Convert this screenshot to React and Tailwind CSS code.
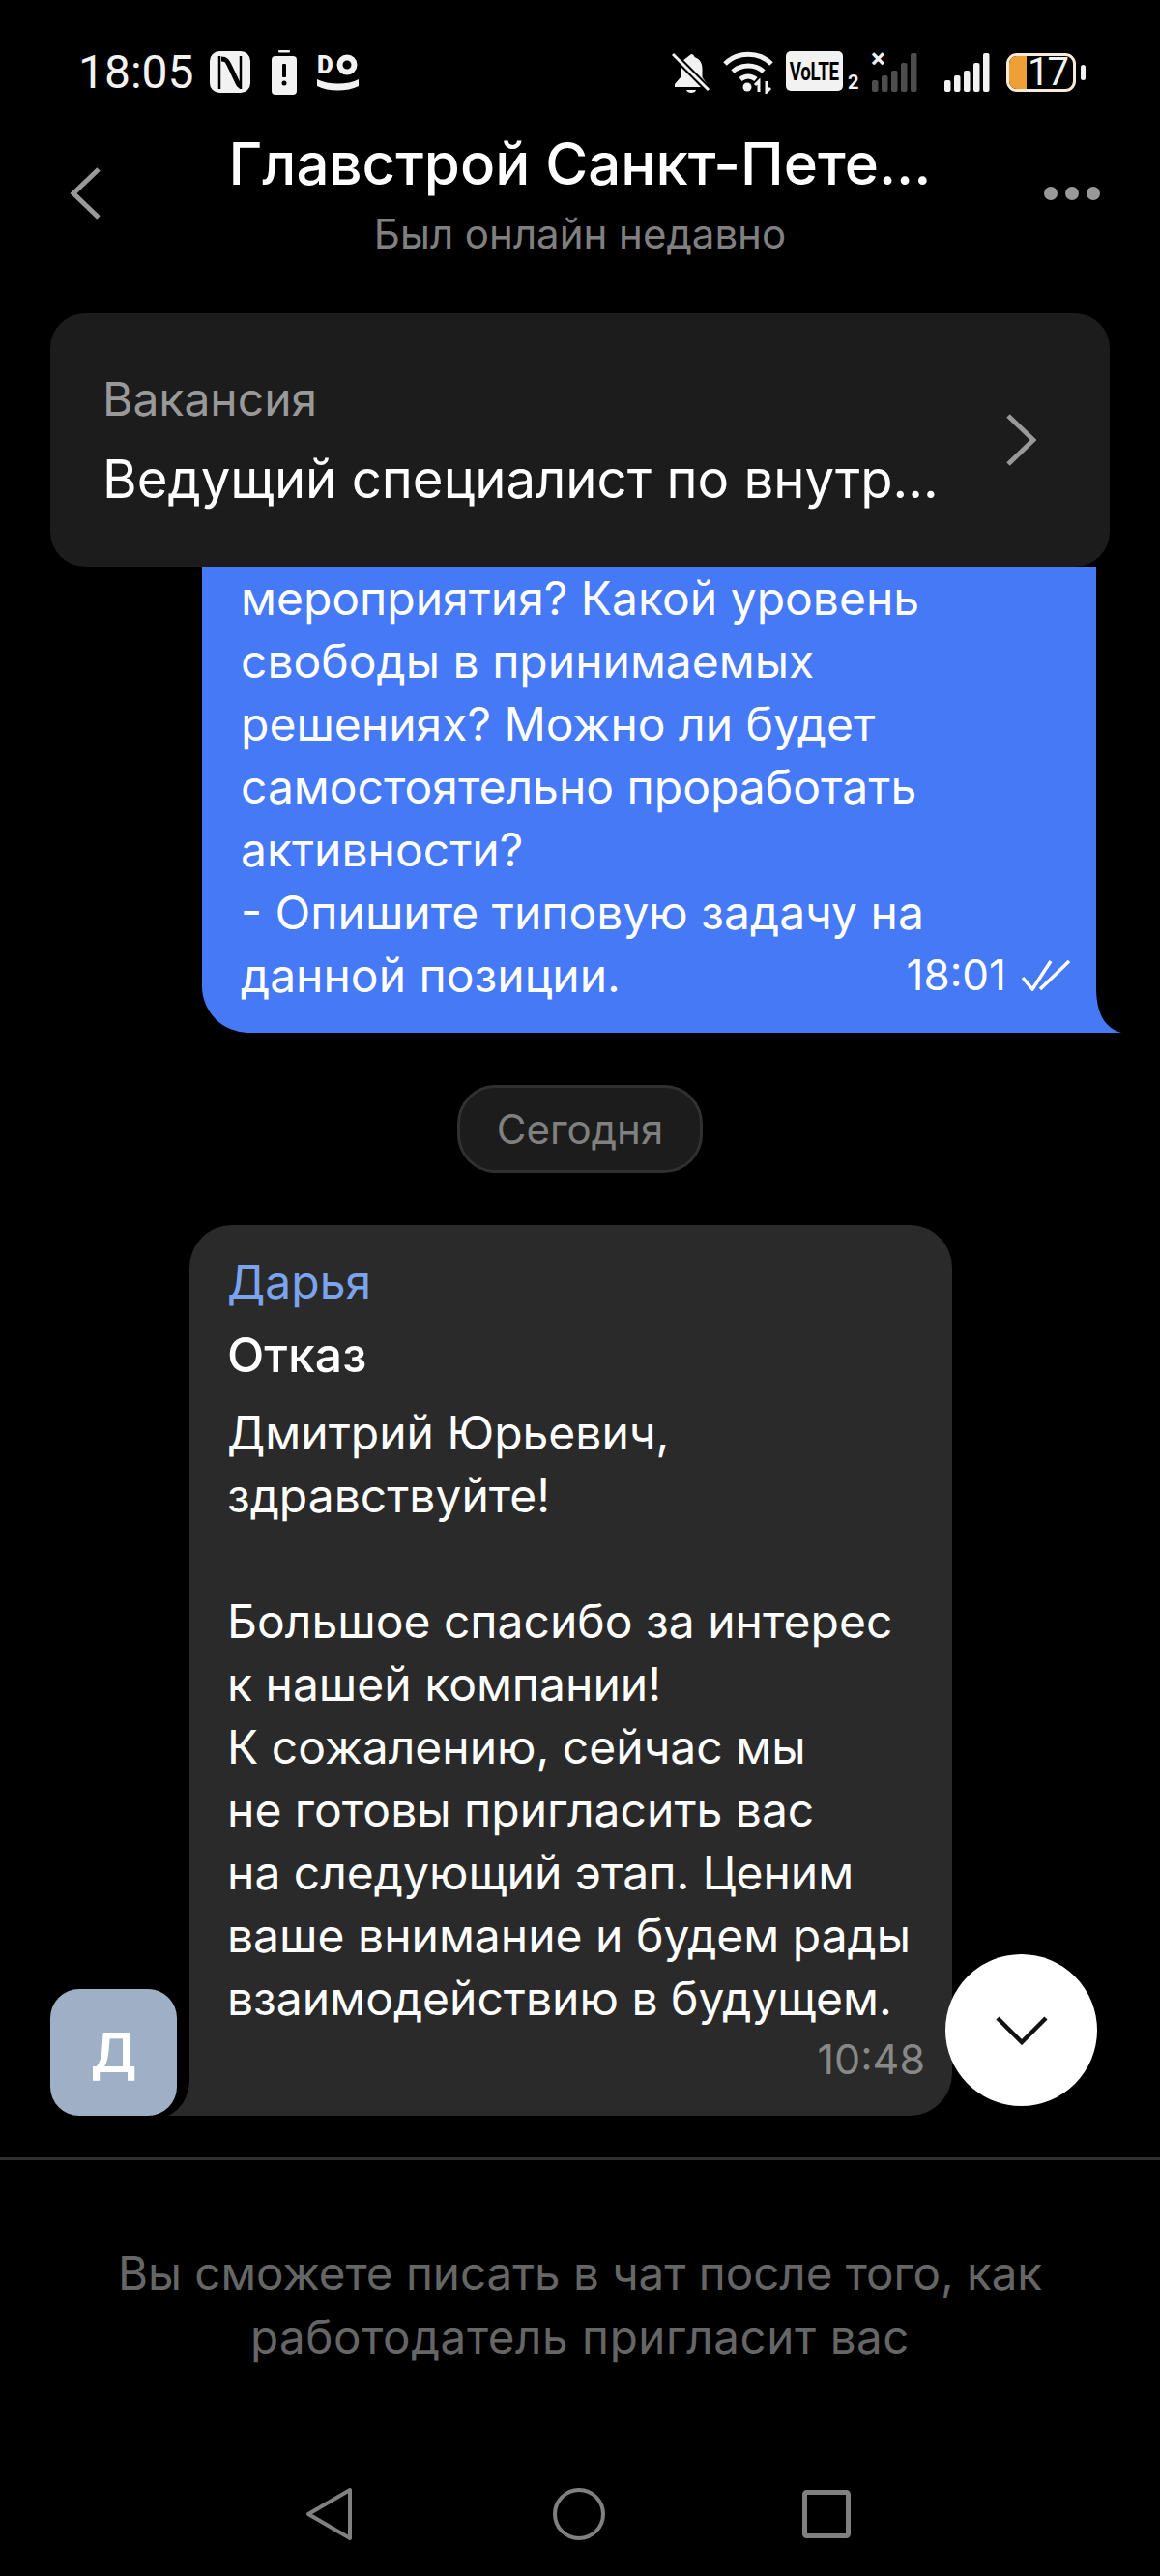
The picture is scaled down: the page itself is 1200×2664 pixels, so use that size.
import React from 'react';

const blueLines = [
  'мероприятия? Какой уровень',
  'свободы в принимаемых',
  'решениях? Можно ли будет',
  'самостоятельно проработать',
  'активности?',
  '- Опишите типовую задачу на',
];

const greyLines = [
  'Дмитрий Юрьевич,',
  'здравствуйте!',
  '\u00a0',
  'Большое спасибо за интерес',
  'к нашей компании!',
  'К сожалению, сейчас мы',
  'не готовы пригласить вас',
  'на следующий этап. Ценим',
  'ваше внимание и будем рады',
  'взаимодействию в будущем.',
];

function Bars({ color }) {
  const tops = [28, 23, 18, 10, 0];
  return (
    <svg width="48" height="40" viewBox="0 0 48 40" fill={color}>
      {tops.map((top, i) => (
        <rect key={i} x={i * 10} y={top} width="6.5" height={40 - top} rx="2" />
      ))}
    </svg>
  );
}

function StatusBar() {
  return (
    <div className="h-[130px] flex justify-between items-start pt-[52px] pl-[81px] pr-[77px] text-[#f2f2f2] font-['Roboto',sans-serif]">
      <div className="flex items-start">
        <span className="text-[48px] leading-[56px] mr-[16px] -mt-[5px] whitespace-nowrap">18:05</span>
        {/* NFC */}
        <svg width="42" height="44" viewBox="0 0 42 44" className="mt-[1px]">
          <rect width="42" height="43" rx="10" fill="#f2f2f2" />
          <path d="M10 5v34M32 5v34" fill="none" stroke="#000" strokeWidth="2.500" />
          <path d="M12 8c5 0 6 2 8 6l9 19c1 2 2 3 3 3" fill="none" stroke="#000" strokeWidth="5" />
          <path d="M10 36h1M32 7h-1" stroke="#000" strokeWidth="3" />
        </svg>
        {/* батарея с предупреждением */}
        <svg width="26" height="46" viewBox="0 0 26 46" className="ml-[22px]">
          <rect x="7" y="0" width="12" height="2.500" rx="1" fill="#f2f2f2" />
          <rect x="0" y="6" width="26" height="40" rx="4" fill="#f2f2f2" />
          <rect x="11" y="14" width="4" height="14" rx="1" fill="#000" />
          <circle cx="13" cy="34" r="2.500" fill="#000" />
        </svg>
        <svg width="48" height="48" viewBox="-2 -8 48 48" className="ml-[19px] -mt-[4px]">
          <text x="0" y="20" fontSize="26" fontWeight="900" fill="#f2f2f2" fontFamily="Roboto, sans-serif">D</text>
          <circle cx="31" cy="11" r="7.500" fill="none" stroke="#f2f2f2" strokeWidth="6" />
          <path d="M0 26c12 6 32 6 43 0v7c-12 6-31 6-43 0z" fill="#f2f2f2" />
        </svg>
      </div>
      <div className="flex items-start mt-[1px]">
        {/* колокольчик выключен */}
        <svg width="40" height="46" viewBox="0 0 40 46">
          <path d="M20 3c2 0 3 1 3.500 3 6 2 8 7 8 12v9l5 7v3H3v-3l6-7v-9c0-3 .5-6 2-8z" fill="#f2f2f2" />
          <path d="M15 40h10c-.5 4-9 4-10 0z" fill="#f2f2f2" />
          <path d="M2 4l36 36" stroke="#000" strokeWidth="7" />
          <path d="M1 3l37 37" stroke="#f2f2f2" strokeWidth="3" />
        </svg>
        {/* wifi */}
        <svg width="54" height="44" viewBox="0 0 54 44" fill="none" stroke="#f2f2f2" strokeWidth="5" className="ml-[13px]">
          <path d="M2 13C15 0 37 0 50 13" />
          <path d="M10 21c9-8 23-8 32 0" />
          <path d="M18 29c5-4 11-4 16 0" />
          <circle cx="25" cy="37" r="4.500" fill="#f2f2f2" stroke="none" />
          <path d="M37 42V31l-4 4M45 31v11l4-4" strokeWidth="3" />
        </svg>
        <div className="ml-[11px] w-[59px] h-[41px] rounded-[5px] bg-[#f2f2f2] flex items-center justify-center">
          <span className="text-black font-bold text-[26px] leading-none scale-x-[0.72] tracking-[-0.5px]">VoLTE</span>
        </div>
        <span className="ml-[5px] mt-[20px] w-[12px] text-[20px] leading-[24px] font-bold">2</span>
        <div className="relative ml-[13px] mt-[2px]">
          <Bars color="#4d4d4d" />
          <span className="absolute -left-[1px] -top-[8px] text-[28px] leading-[28px] font-bold">×</span>
        </div>
        <div className="ml-[27px] mt-[2px]">
          <Bars color="#f2f2f2" />
        </div>
        {/* батарея 17 */}
        <div className="ml-[16px] mt-[2px] w-[72px] h-[40px] rounded-[11px] border-[3px] border-[#f7ead9] flex items-center">
          <div className="w-[18px] h-full rounded-l-[8px] bg-[#ee9f35]"></div>
          <span className="ml-[1px] text-[40px] leading-[34px] tracking-[-2px]">17</span>
        </div>
        <div className="ml-[5px] mt-[14px] w-[5px] h-[16px] rounded-full bg-[#f2f2f2]"></div>
      </div>
    </div>
  );
}

function Header() {
  return (
    <div className="h-[194px] pt-[1px] relative flex flex-col items-center">
      <svg width="32" height="54" viewBox="0 0 32 54" fill="none" stroke="#999" strokeWidth="5" className="absolute left-[72px] top-[43px]">
        <path d="M30 2 4 27l26 25" />
      </svg>
      <div className="text-[60px] leading-[76px] font-medium text-white">Главстрой Санкт-Пете...</div>
      <div className="text-[42px] leading-[52px] mt-[9px] text-[#808080]">Был онлайн недавно</div>
      <div className="absolute right-[62px] top-[63px] flex gap-[8px]">
        <span className="w-[14px] h-[14px] rounded-full bg-[#999]"></span>
        <span className="w-[14px] h-[14px] rounded-full bg-[#999]"></span>
        <span className="w-[14px] h-[14px] rounded-full bg-[#999]"></span>
      </div>
    </div>
  );
}

export default function App() {
  return (
    <div className="w-[1200px] h-[2664px] bg-black overflow-hidden relative font-['Inter',sans-serif] flex flex-col">
      <StatusBar />
      <Header />

      {/* Вакансия */}
      <div className="mx-[52px] h-[262px] rounded-[36px] bg-[#1c1c1c] flex items-center justify-between pl-[54px] pr-[76px] shrink-0">
        <div className="pt-[6px]">
          <div className="text-[48px] leading-[56px] text-[#999]">Вакансия</div>
          <div className="text-[54.500px] leading-[72px] mt-[18px] text-white">Ведущий специалист по внутр...</div>
        </div>
        <svg width="32" height="54" viewBox="0 0 32 54" fill="none" stroke="#999" strokeWidth="5">
          <path d="M3 2l26 25L3 52" />
        </svg>
      </div>

      {/* Сообщение соискателя */}
      <div className="relative ml-[209px] w-[925px] h-[482px] bg-[#4579f5] rounded-bl-[48px] pl-[40px] text-white text-[48px] leading-[65px] shrink-0">
        {blueLines.map((line) => (
          <div key={line}>{line}</div>
        ))}
        <div className="flex items-end justify-between pr-[25px]">
          <span>данной позиции.</span>
          <span className="flex items-center text-[44px] gap-[16px]">
            18:01
            <svg width="52" height="32" viewBox="0 0 52 32" fill="none" stroke="#fff" strokeWidth="3.500">
              <path d="M1 18l10 12L30 1" />
              <path d="M19 30 49 1" />
            </svg>
          </span>
        </div>
        <svg width="28" height="48" viewBox="0 0 28 48" className="absolute left-full bottom-0">
          <path d="M0 0c0 24 6 42 26 48H0z" fill="#4579f5" />
        </svg>
      </div>

      {/* Дата */}
      <div className="flex justify-center mt-[54px] shrink-0">
        <div className="w-[254px] h-[91px] rounded-[40px] bg-[#1c1c1c] border-[3px] border-[#303030] flex items-center justify-center text-[42px] text-[#808080]">
          Сегодня
        </div>
      </div>

      {/* Сообщение работодателя */}
      <div className="flex items-end ml-[52px] mt-[54px] shrink-0">
        <div className="w-[131px] h-[131px] rounded-[30px] bg-[#9fb0c6] flex items-center justify-center text-white text-[56px] font-semibold z-10">
          Д
        </div>
        <div className="relative ml-[13px] w-[789px] h-[921px] rounded-[44px] rounded-bl-none bg-[#2a2a2a] pl-[39px] pt-[26px] text-[48px] leading-[65px] text-white">
          <div className="text-[#7ba4ef]">Дарья</div>
          <div className="font-medium mt-[11px] text-[50px]">Отказ</div>
          <div className="mt-[15px]">
            {greyLines.map((line, i) => (
              <div key={i}>{line}</div>
            ))}
          </div>
          <div className="text-right pr-[28px] text-[43px] leading-[60px] text-[#888]">10:48</div>
          <svg width="30" height="40" viewBox="0 0 30 40" className="absolute right-full bottom-0">
            <path d="M30 0c0 18-6 32-22 40h22z" fill="#2a2a2a" />
          </svg>
        </div>
      </div>

      <div className="h-[3px] mt-[43px] bg-[#303030] shrink-0"></div>

      <div className="mt-[84px] text-center text-[47.500px] leading-[66px] text-[#666] shrink-0">
        <div>Вы сможете писать в чат после того, как</div>
        <div className="tracking-[0.6px]">работодатель пригласит вас</div>
      </div>

      {/* Навигация */}
      <div className="flex items-center justify-center mt-[122px] pr-[4px] shrink-0">
        <svg width="50" height="56" viewBox="0 0 50 56" fill="none" stroke="#808080" strokeWidth="4" strokeLinejoin="round">
          <path d="M46 3v50L3 28z" />
        </svg>
        <svg width="56" height="56" viewBox="0 0 56 56" fill="none" stroke="#808080" strokeWidth="4" className="ml-[205px]">
          <circle cx="28" cy="28" r="25" />
        </svg>
        <svg width="50" height="50" viewBox="0 0 50 50" fill="none" stroke="#808080" strokeWidth="5" strokeLinejoin="round" className="ml-[203px]">
          <rect x="2.500" y="2.500" width="45" height="45" rx="2" />
        </svg>
      </div>

      {/* Кнопка вниз */}
      <div className="absolute left-[978px] top-[2021px] w-[157px] h-[157px] rounded-full bg-white flex items-center justify-center">
        <svg width="54" height="30" viewBox="0 0 54 30" fill="none" stroke="#111" strokeWidth="4.500">
          <path d="M2 2l25 25L52 2" />
        </svg>
      </div>
    </div>
  );
}
